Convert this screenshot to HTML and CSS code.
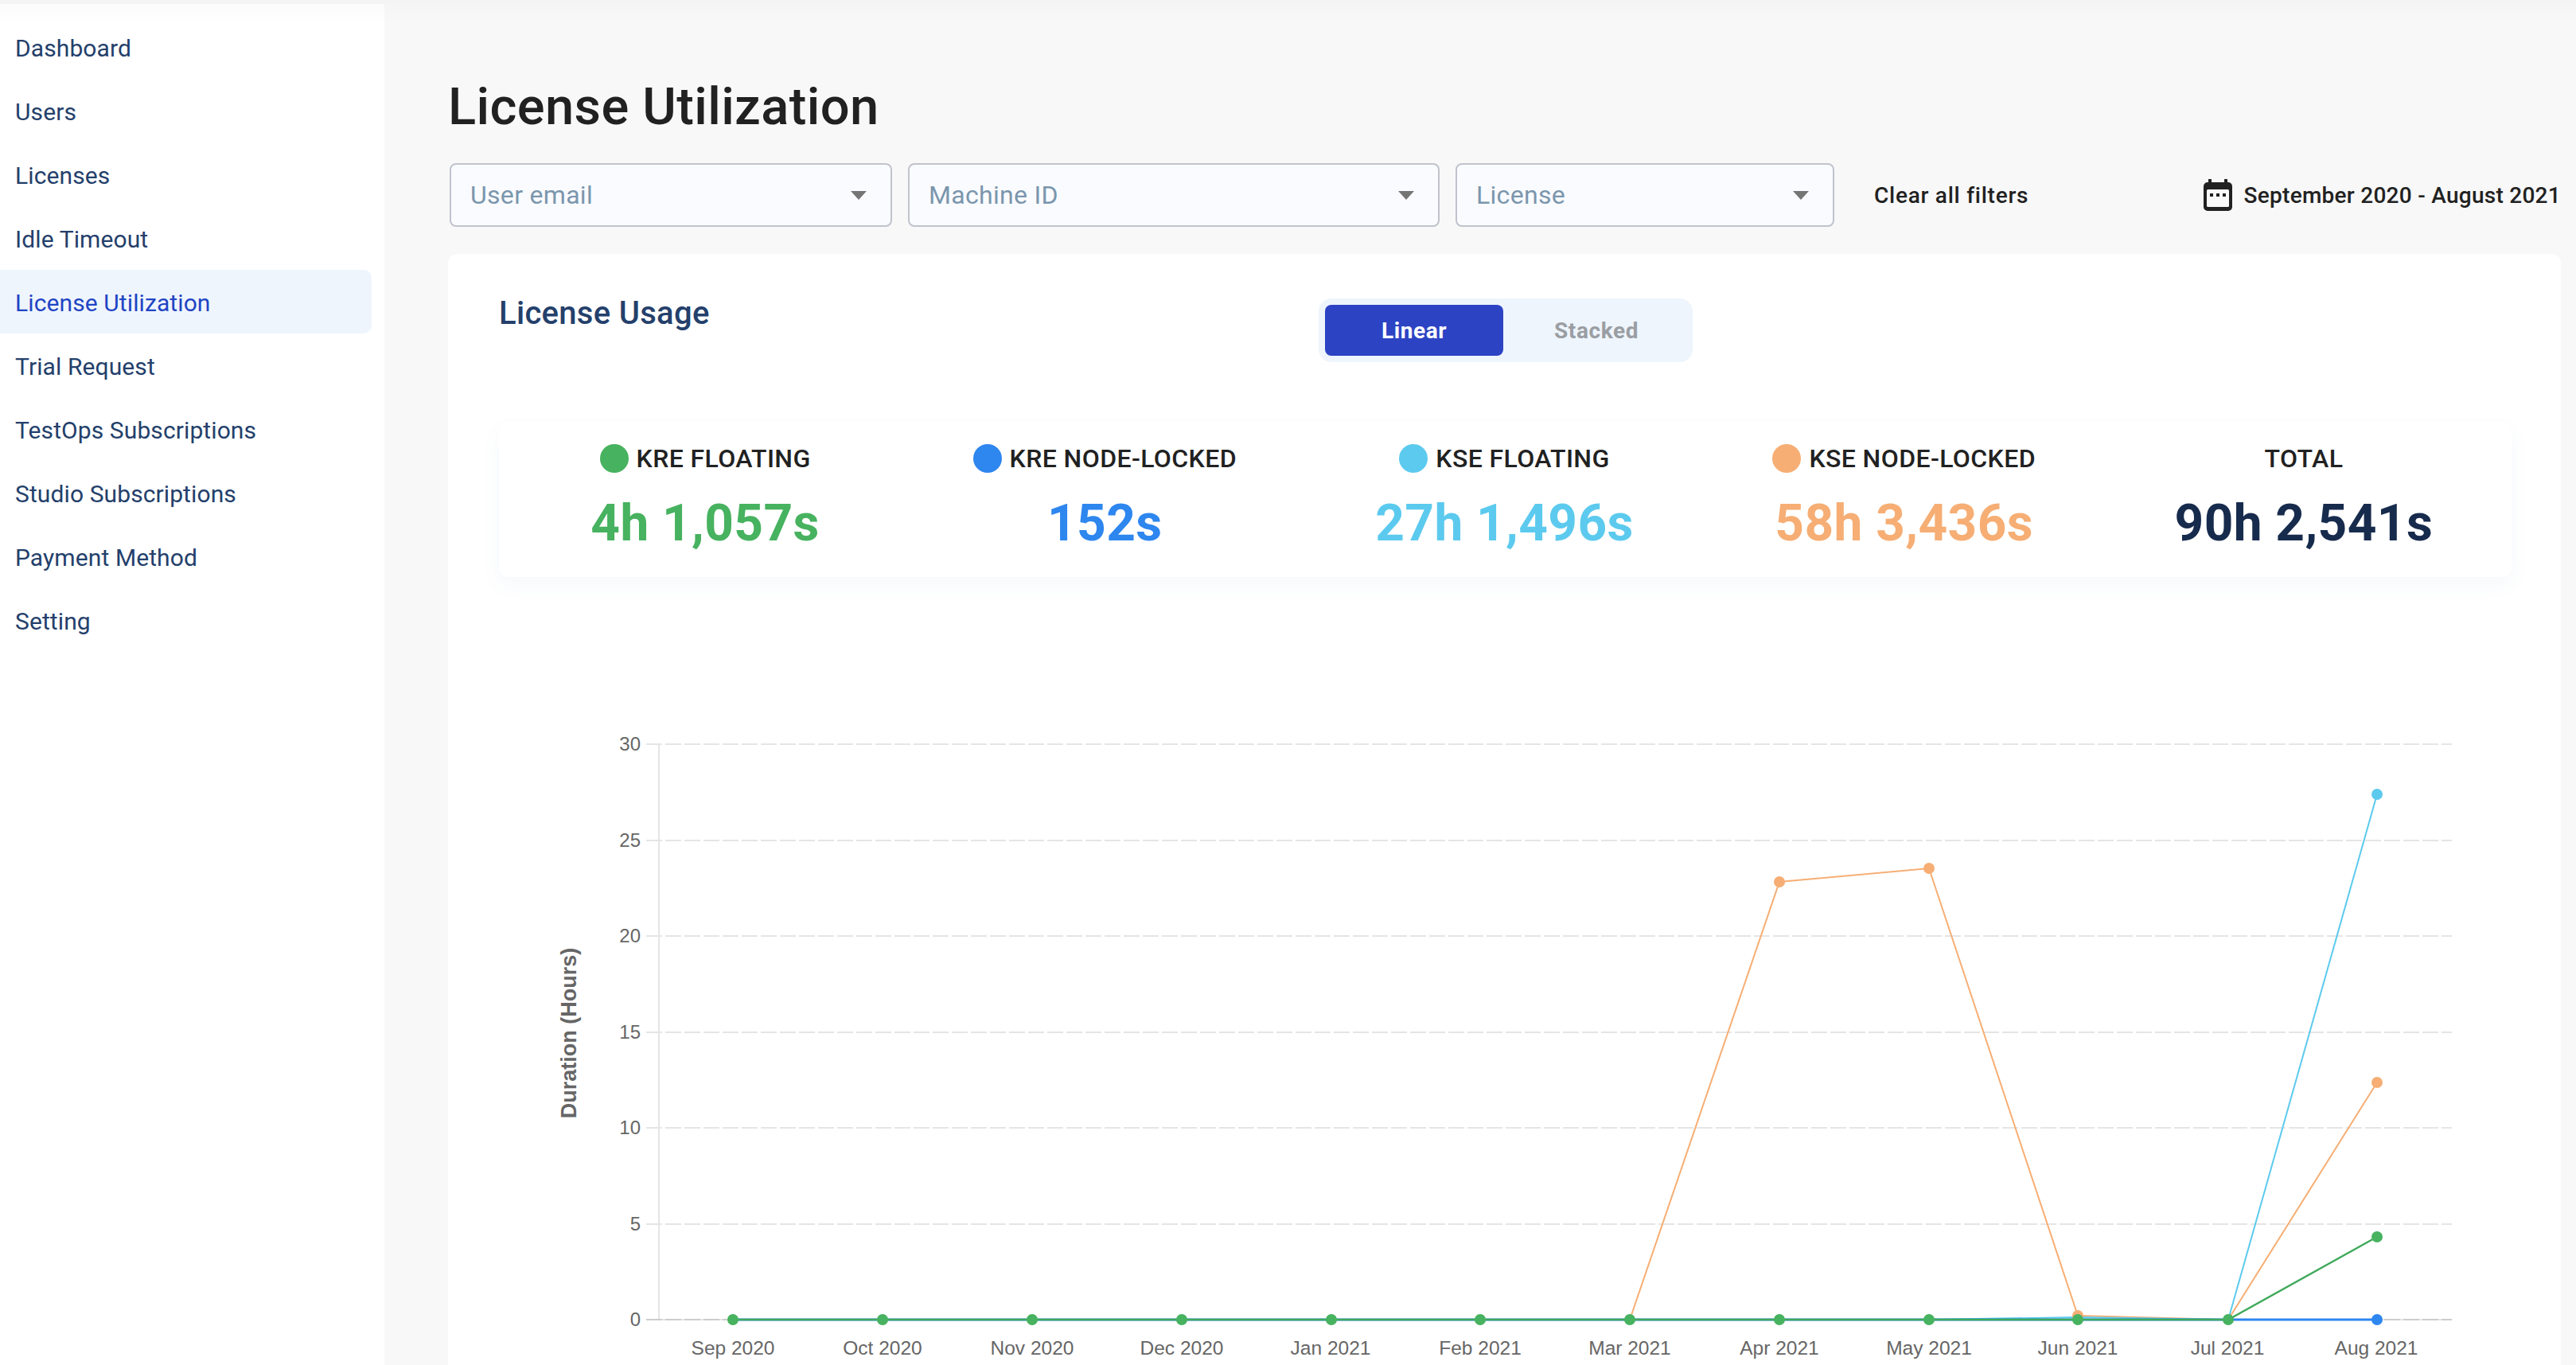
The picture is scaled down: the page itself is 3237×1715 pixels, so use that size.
FILE: index.html
```html
<!DOCTYPE html>
<html lang="en">
<head>
<meta charset="utf-8">
<title>License Utilization</title>
<link rel="stylesheet" href="styles.css">
</head>
<body>
<div class="app">
  <nav class="sidebar">
    <a class="nav-item">Dashboard</a>
    <a class="nav-item">Users</a>
    <a class="nav-item">Licenses</a>
    <a class="nav-item">Idle Timeout</a>
    <a class="nav-item active">License Utilization</a>
    <a class="nav-item">Trial Request</a>
    <a class="nav-item">TestOps Subscriptions</a>
    <a class="nav-item">Studio Subscriptions</a>
    <a class="nav-item">Payment Method</a>
    <a class="nav-item">Setting</a>
  </nav>
  <main class="main">
    <h1 class="title">License Utilization</h1>
    <div class="filters">
      <div class="select select-user"><span>User email</span><i class="caret"></i></div>
      <div class="select select-machine"><span>Machine ID</span><i class="caret"></i></div>
      <div class="select select-license"><span>License</span><i class="caret"></i></div>
      <button class="clear">Clear all filters</button>
      <div class="range">
        <svg class="cal" viewBox="0 0 36 40" width="36" height="40">
          <path fill="#212121" d="M6 0h4v4h16V0h4v4h1a5 5 0 0 1 5 5v26a5 5 0 0 1-5 5H5a5 5 0 0 1-5-5V9a5 5 0 0 1 5-5h1z"/>
          <rect x="4" y="13" width="28" height="22" rx="1.5" fill="#f8f8f8"/>
          <rect x="8" y="18" width="4" height="4" fill="#212121"/>
          <rect x="16" y="18" width="4" height="4" fill="#212121"/>
          <rect x="24" y="18" width="4" height="4" fill="#212121"/>
        </svg>
        <span>September 2020 - August 2021</span>
      </div>
    </div>
    <section class="card">
      <div class="card-head">
        <h2 class="card-title">License Usage</h2>
        <div class="toggle">
          <span class="toggle-btn on">Linear</span>
          <span class="toggle-btn">Stacked</span>
        </div>
      </div>
      <div class="stats">
        <div class="stat"><div class="stat-label"><i class="dot green"></i>KRE FLOATING</div><div class="stat-value t-green">4h 1,057s</div></div>
        <div class="stat"><div class="stat-label"><i class="dot blue"></i>KRE NODE-LOCKED</div><div class="stat-value t-blue">152s</div></div>
        <div class="stat"><div class="stat-label"><i class="dot cyan"></i>KSE FLOATING</div><div class="stat-value t-cyan">27h 1,496s</div></div>
        <div class="stat"><div class="stat-label"><i class="dot orange"></i>KSE NODE-LOCKED</div><div class="stat-value t-orange">58h 3,436s</div></div>
        <div class="stat"><div class="stat-label">TOTAL</div><div class="stat-value t-navy">90h 2,541s</div></div>
      </div>
      <svg class="chart" viewBox="0 0 2655 1000" width="2655" height="1000">
        <g transform="translate(-563 -726)">
          <g class="grid">
            <path d="M812 935H3081M812 1056H3081M812 1176H3081M812 1297H3081M812 1417H3081M812 1538H3081"/>
          </g>
          <path class="axis" d="M828 935V1658"/>
          <path class="axis" d="M828 1658H3081"/>
          <path class="axis0" d="M812 1658H3081"/>
          <g class="yt">
            <text x="805" y="943">30</text><text x="805" y="1064">25</text><text x="805" y="1184">20</text><text x="805" y="1305">15</text><text x="805" y="1425">10</text><text x="805" y="1546">5</text><text x="805" y="1666">0</text>
          </g>
          <text class="ylabel" transform="translate(724 1298) rotate(-90)">Duration (Hours)</text>
          <g class="xt">
            <text x="921" y="1702">Sep 2020</text><text x="1109" y="1702">Oct 2020</text><text x="1297" y="1702">Nov 2020</text><text x="1485" y="1702">Dec 2020</text><text x="1672" y="1702">Jan 2021</text><text x="1860" y="1702">Feb 2021</text><text x="2048" y="1702">Mar 2021</text><text x="2236" y="1702">Apr 2021</text><text x="2424" y="1702">May 2021</text><text x="2611" y="1702">Jun 2021</text><text x="2799" y="1702">Jul 2021</text><text x="2986" y="1702">Aug 2021</text>
          </g>
          <polyline class="line l-orange" points="921,1658 1109,1658 1297,1658 1485,1658 1673,1658 1860,1658 2048,1658 2236,1108 2424,1091 2611,1653 2800,1658 2987,1360"/>
          <polyline class="line l-cyan" points="921,1658 1109,1658 1297,1658 1485,1658 1673,1658 1860,1658 2048,1658 2236,1658 2424,1658 2611,1655 2800,1658 2987,998"/>
          <polyline class="line l-blue" points="921,1658 2800,1658 2987,1658"/>
          <polyline class="line l-green" points="921,1658 1109,1658 1297,1658 1485,1658 1673,1658 1860,1658 2048,1658 2236,1658 2424,1658 2611,1658 2800,1658 2987,1554"/>
          <g class="pts-orange"><circle cx="2236" cy="1108" r="7"/><circle cx="2424" cy="1091" r="7"/><circle cx="2611" cy="1653" r="7"/><circle cx="2987" cy="1360" r="7"/></g>
          <g class="pts-cyan"><circle cx="2987" cy="998" r="7"/></g>
          <g class="pts-blue"><circle cx="2987" cy="1658" r="7"/></g>
          <g class="pts-green"><circle cx="921" cy="1658" r="7"/><circle cx="1109" cy="1658" r="7"/><circle cx="1297" cy="1658" r="7"/><circle cx="1485" cy="1658" r="7"/><circle cx="1673" cy="1658" r="7"/><circle cx="1860" cy="1658" r="7"/><circle cx="2048" cy="1658" r="7"/><circle cx="2236" cy="1658" r="7"/><circle cx="2424" cy="1658" r="7"/><circle cx="2611" cy="1658" r="7"/><circle cx="2800" cy="1658" r="7"/><circle cx="2987" cy="1554" r="7"/></g>
        </g>
      </svg>
    </section>
  </main>
</div>
</body>
</html>
```
FILE: styles.css
```css
* { box-sizing: border-box; }
html, body { margin: 0; height: 100%; overflow: hidden; }
body { background: #f8f8f8; font-family: Roboto, "Liberation Sans", sans-serif; }
.app { display: flex; height: 1715px; padding-top: 5px; background: #f4f4f4; }
.sidebar { width: 483px; flex: none; background: linear-gradient(#fbfbfb, #fff 24px); padding: 14px 16px 0 0; display: flex; flex-direction: column; }
.nav-item { height: 80px; display: flex; align-items: center; padding: 2px 0 0 19px; font-size: 30px; color: #24406b; letter-spacing: .1px; border-radius: 0 10px 10px 0; }
.nav-item.active { background: #eff5fd; color: #1f45c4; }
.main { flex: 1; min-width: 0; padding: 0 19px 0 80px; background: linear-gradient(#f5f5f5, #f8f8f8 24px); }
.title { margin: 0; height: 200px; padding-top: 93px; font-size: 65px; line-height: 72px; font-weight: 500; letter-spacing: .4px; color: #212121; }
.filters { display: flex; align-items: center; height: 80px; gap: 20px; padding-left: 2px; }
.select { height: 80px; background: #fafbff; border: 2px solid #c0c3cc; border-radius: 8px; display: flex; align-items: center; justify-content: space-between; padding: 0 30px 0 24px; font-size: 32px; color: #7b96ad; letter-spacing: .3px; }
.select-user { width: 556px; }
.select-machine { width: 668px; }
.select-license { width: 476px; }
.caret { width: 0; height: 0; border-left: 10px solid transparent; border-right: 10px solid transparent; border-top: 11px solid #757575; }
.clear { margin-left: 30px; padding: 0; border: 0; background: none; font: 500 28px Roboto, sans-serif; letter-spacing: .75px; color: #212121; }
.range { margin-left: auto; display: flex; align-items: center; gap: 15px; font-size: 28px; font-weight: 500; letter-spacing: .27px; color: #212121; }
.cal { display: block; }
.card { margin-top: 34px; background: #fff; border-radius: 12px 12px 0 0; height: 1396px; padding: 0; overflow: hidden; }
.card-head { height: 212px; padding: 51px 0 0 64px; position: relative; }
.card-title { margin: 0; font-size: 40px; line-height: 48px; font-weight: 500; color: #24406b; letter-spacing: .3px; }
.toggle { position: absolute; left: 1094px; top: 56px; width: 470px; height: 80px; background: #eef5fc; border-radius: 16px; padding: 8px; display: flex; }
.toggle-btn { width: 224px; height: 64px; display: flex; align-items: center; justify-content: center; border-radius: 8px; font-size: 28px; font-weight: 700; letter-spacing: .6px; color: #9a9ea3; }
.toggle-btn + .toggle-btn { flex: 1; padding-left: 4px; }
.toggle-btn.on { background: #2c43c4; color: #fff; }
.stats { margin: 0 62px 1px 64px; height: 194px; padding: 17px 10px 0 8px; display: grid; grid-template-columns: repeat(5, 1fr); background: #fff; border-radius: 12px; box-shadow: 0 10px 24px rgba(70, 110, 170, .05); }
.stat { text-align: center; }
.stat-label { height: 56px; display: flex; align-items: center; justify-content: center; gap: 10px; font-size: 32px; font-weight: 500; letter-spacing: .4px; color: #212121; }
.dot { width: 36px; height: 36px; border-radius: 50%; display: block; }
.green { background: #47b25f; }
.blue { background: #2e86ef; }
.cyan { background: #5ccaee; }
.orange { background: #f6ae74; }
.stat-value { margin-top: 18px; font-size: 64px; line-height: 72px; font-weight: 700; letter-spacing: .4px; }
.t-green { color: #47b25f; }
.t-blue { color: #2e86ef; }
.t-cyan { color: #5ccaee; }
.t-orange { color: #f6ae74; }
.t-navy { color: #172b4d; }
.chart { display: block; }
.grid path { fill: none; stroke: #e5e5e5; stroke-width: 2; stroke-dasharray: 20 4; }
.axis { fill: none; stroke: #e5e5e5; stroke-width: 2; }
.axis0 { fill: none; stroke: #cccccc; stroke-width: 2; stroke-dasharray: 20 4; }
.yt text { font: 24px "Liberation Sans", sans-serif; fill: #666; text-anchor: end; }
.xt text { font: 24.5px "Liberation Sans", sans-serif; fill: #666; text-anchor: middle; }
.ylabel { font: 700 27px "Liberation Sans", sans-serif; fill: #666; text-anchor: middle; }
.line { fill: none; stroke-width: 2; }
.l-orange { stroke: #f6ae74; }
.l-cyan { stroke: #5ccaee; }
.l-blue { stroke: #2e86ef; stroke-width: 3; }
.l-green { stroke: #3fa95b; stroke-width: 2.5; }
.pts-orange { fill: #f6ae74; }
.pts-cyan { fill: #5ccaee; }
.pts-blue { fill: #2e86ef; }
.pts-green { fill: #47b25f; }
```
